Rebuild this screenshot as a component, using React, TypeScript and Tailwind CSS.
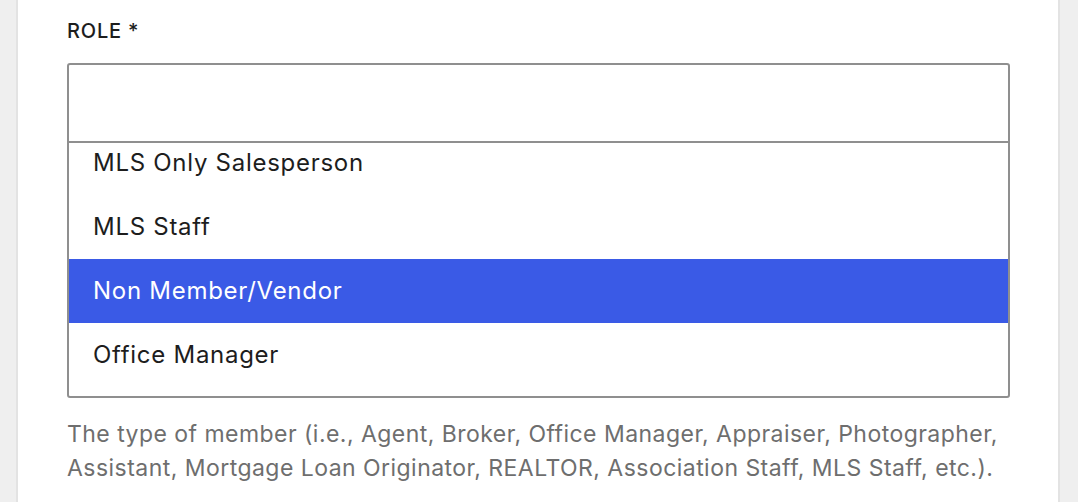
const options = ['MLS Only Salesperson', 'MLS Staff', 'Non Member/Vendor', 'Office Manager']

const App = () => {
  return (
    <div className="flex min-h-[502px] bg-[#efefef] pl-[16px] font-['Inter','Liberation_Sans',sans-serif]">
      <div className="w-[1044px] border-x-2 border-[#e3e3e3] bg-white pl-[49px] pt-[17px]">
        <label className="block text-[20px] font-medium leading-[28px] tracking-[0.04em] text-[#1d1d1d]">
          ROLE *
        </label>
        <div className="mt-[18px] w-[943px] rounded-[3px] border-2 border-[#8f8f8f]">
          <div className="h-[78px] border-b-2 border-[#8f8f8f]"></div>
          <div className="h-[253px] overflow-hidden">
            <ul className="-mt-[12px]">
              {options.map((o) => (
                <li
                  key={o}
                  className={
                    o === 'Non Member/Vendor'
                      ? 'flex h-[64px] items-center bg-[#3a5ae6] pl-[24px] text-[24px] tracking-[0.03em] text-white'
                      : 'flex h-[64px] items-center pl-[24px] text-[24px] tracking-[0.03em] text-[#1d1d1d]'
                  }
                >
                  {o}
                </li>
              ))}
            </ul>
          </div>
        </div>
        <p className="mt-[19px] w-[950px] text-[23px] leading-[34px] tracking-[0.02em] text-[#6e6e6e]">
          The type of member (i.e., Agent, Broker, Office Manager, Appraiser, Photographer,
          <br />
          Assistant, Mortgage Loan Originator, REALTOR, Association Staff, MLS Staff, etc.).
        </p>
      </div>
    </div>
  )
}

export default App
